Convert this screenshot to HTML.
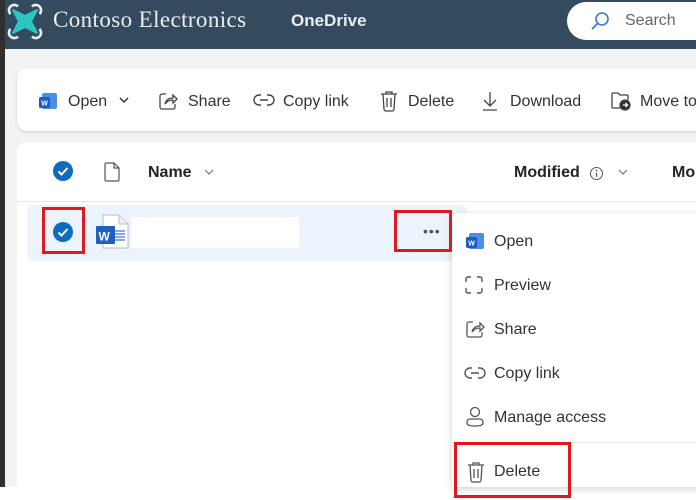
<!DOCTYPE html>
<html><head><style>
*{margin:0;padding:0;box-sizing:border-box}
body{width:696px;height:500px;overflow:hidden;background:#fff;position:relative;font-family:"Liberation Sans",sans-serif;color:#242424}
.a{position:absolute}
.t{position:absolute;font-size:16px;color:#333;line-height:20px;white-space:nowrap}
svg{position:absolute}
</style></head><body>
<div class="a" style="left:0;top:0;width:696px;height:487px;background:#f3f3f3"></div>
<div class="a" style="left:0;top:0;width:696px;height:49px;background:#344a5e"></div>
<div class="a" style="left:0;top:0;width:5px;height:487px;background:#2f2f2f"></div>
<!-- logo -->
<svg style="left:7px;top:3px" width="36" height="37" viewBox="0 0 36 37">
<g fill="none" stroke="#e8eef2" stroke-width="2.6"><path d="M3.5 11 A5 5 0 1 1 11 3.5"/><path d="M25 3.5 A5 5 0 1 1 32.5 11"/><path d="M3.5 26 A5 5 0 1 0 11 33.5"/><path d="M32.5 26 A5 5 0 1 1 25 33.5"/></g>
<path d="M6 7 L18 13 L30 7 L24 18.5 L30 30 L18 24 L6 30 L12 18.5Z" fill="#2ec4c4" stroke="#2ec4c4" stroke-width="2" stroke-linejoin="round"/>
</svg>
<div class="a" style="left:53px;top:7px;font-family:'Liberation Serif',serif;font-size:23px;letter-spacing:0.4px;color:#e8eef2;white-space:nowrap">Contoso Electronics</div>
<div class="a" style="left:291px;top:11px;font-size:17px;font-weight:bold;color:#e8eef2">OneDrive</div>
<div class="a" style="left:567px;top:2px;width:150px;height:38px;border-radius:19px;background:#fff"></div>
<svg style="left:589px;top:10px" width="22" height="22" viewBox="0 0 22 22"><circle cx="13" cy="9" r="6" fill="none" stroke="#3b7ad0" stroke-width="1.6"/><path d="M9 13 L3 19" stroke="#3b7ad0" stroke-width="1.8"/></svg>
<div class="t" style="left:625px;top:11px;color:#666">Search</div>
<!-- toolbar -->
<div class="a" style="left:17px;top:68px;width:700px;height:63px;background:#fff;border-radius:10px;box-shadow:0 1px 3px rgba(0,0,0,.15)"></div>
<svg style="left:38px;top:91px" width="20" height="20" viewBox="0 0 20 20"><rect x="4" y="2" width="15" height="16" rx="2" fill="#4a8ee8"/><rect x="1" y="6" width="11" height="11" rx="1.5" fill="#1b5bc2"/><text x="3.2" y="14.5" font-size="7" fill="#fff" font-weight="bold" font-family="Liberation Sans">W</text></svg>
<div class="t" style="left:68px;top:92px">Open</div>
<svg style="left:118px;top:96px" width="12" height="8"><path d="M2 2 L6 6 L10 2" stroke="#333" stroke-width="1.5" fill="none"/></svg>
<svg style="left:158px;top:91px" width="20" height="20" viewBox="0 0 20 20" fill="none" stroke="#444" stroke-width="1.3"><path d="M8 3H4a2 2 0 0 0-2 2v11a2 2 0 0 0 2 2h11a2 2 0 0 0 2-2v-3"/><path d="M7 13c1-4 4-6 8-6V4l4 4-4 4V9c-3 0-6 1-8 4z"/></svg>
<div class="t" style="left:188px;top:92px">Share</div>
<svg style="left:253px;top:93px" width="22" height="14" viewBox="0 0 22 14" fill="none" stroke="#444" stroke-width="1.4"><path d="M8 2H6a5 5 0 0 0 0 10h2M14 2h2a5 5 0 0 1 0 10h-2M7 7h8"/></svg>
<div class="t" style="left:283px;top:92px">Copy link</div>
<svg style="left:379px;top:90px" width="20" height="22" viewBox="0 0 20 22" fill="none" stroke="#444" stroke-width="1.3"><path d="M2 4h16M7 4V2h6v2M4 4l1 15a2 2 0 0 0 2 2h6a2 2 0 0 0 2-2l1-15M8 8v9M12 8v9"/></svg>
<div class="t" style="left:408px;top:92px">Delete</div>
<svg style="left:481px;top:90px" width="18" height="22" viewBox="0 0 18 22" fill="none" stroke="#444" stroke-width="1.3"><path d="M9 2v14M3 10l6 6 6-6M2 20h14"/></svg>
<div class="t" style="left:510px;top:92px">Download</div>
<svg style="left:610px;top:90px" width="22" height="22" viewBox="0 0 22 22" fill="none" stroke="#444" stroke-width="1.3"><path d="M11 18H3a1 1 0 0 1-1-1V4a1 1 0 0 1 1-1h5l2 2h7a1 1 0 0 1 1 1v4"/><circle cx="15" cy="15" r="5" fill="#333"/><path d="M13 15h4M15.5 13l2 2-2 2" stroke="#fff"/></svg>
<div class="t" style="left:640px;top:92px">Move to</div>
<!-- list card -->
<div class="a" style="left:17px;top:143px;width:700px;height:344px;background:#fff;border-radius:8px 0 0 0"></div>
<div class="a" style="left:17px;top:201px;width:700px;height:1px;background:#e8e8e8"></div>
<svg style="left:52px;top:160px" width="22" height="22" viewBox="0 0 22 22"><circle cx="11" cy="11" r="10" fill="#0f6cbd"/><path d="M6.5 11.5 L9.5 14.5 L15.5 8" stroke="#fff" stroke-width="2" fill="none"/></svg>
<svg style="left:104px;top:162px" width="16" height="20" viewBox="0 0 16 20" fill="none" stroke="#555" stroke-width="1.2"><path d="M2 1h8l5 5v12a1 1 0 0 1-1 1H2a1 1 0 0 1-1-1V2a1 1 0 0 1 1-1zM10 1v5h5"/></svg>
<div class="t" style="left:148px;top:163px;font-weight:bold;color:#242424">Name</div>
<svg style="left:204px;top:169px" width="10" height="7"><path d="M1 1 L5 5 L9 1" stroke="#777" stroke-width="1.2" fill="none"/></svg>
<div class="t" style="left:514px;top:163px;font-weight:bold;color:#242424">Modified</div>
<svg style="left:589px;top:166px" width="15" height="15"><circle cx="7.5" cy="7.5" r="6" fill="none" stroke="#555" stroke-width="1"/><path d="M7.5 6.5v4.5" stroke="#555" stroke-width="1.2"/><circle cx="7.5" cy="4.5" r=".9" fill="#555"/></svg>
<svg style="left:618px;top:169px" width="10" height="7"><path d="M1 1 L5 5 L9 1" stroke="#777" stroke-width="1.2" fill="none"/></svg>
<div class="t" style="left:672px;top:163px;font-weight:bold;color:#242424">Mo</div>
<!-- selected row -->
<div class="a" style="left:27px;top:205px;width:440px;height:56px;background:#ebf3fc;border-radius:6px"></div>
<svg style="left:52px;top:221px" width="22" height="22" viewBox="0 0 22 22"><circle cx="11" cy="11" r="10" fill="#0f6cbd"/><path d="M6.5 11.5 L9.5 14.5 L15.5 8" stroke="#fff" stroke-width="2" fill="none"/></svg>
<svg style="left:95px;top:214px" width="36" height="36" viewBox="0 0 36 36"><path d="M8 1h16l9 9v24H8z" fill="#fff" stroke="#bbb"/><path d="M24 1v9h9" fill="#eee" stroke="#bbb"/><path d="M20 17h10M20 20h10M20 23h10M20 26h10" stroke="#5a8fd8" stroke-width="1.4"/><rect x="1" y="12" width="19" height="18" rx="1" fill="#1f5fbf"/><text x="3.5" y="26.5" font-size="12" fill="#fff" font-weight="bold" font-family="Liberation Sans">W</text></svg>
<div class="a" style="left:131px;top:217px;width:168px;height:31px;background:#fff"></div>
<div class="a" style="left:423px;top:223px;font-size:14px;color:#555;letter-spacing:1px">•••</div>
<!-- menu -->
<div class="a" style="left:452px;top:213px;width:260px;height:274px;background:#fff;border-radius:6px 0 0 0;box-shadow:0 2px 8px rgba(0,0,0,.18)"></div>
<div class="a" style="left:452px;top:442px;width:260px;height:1px;background:#e6e6e6"></div>
<svg style="left:465px;top:231px" width="20" height="20" viewBox="0 0 20 20"><rect x="4" y="2" width="15" height="16" rx="2" fill="#4a8ee8"/><rect x="1" y="6" width="11" height="11" rx="1.5" fill="#1b5bc2"/><text x="3.2" y="14.5" font-size="7" fill="#fff" font-weight="bold" font-family="Liberation Sans">W</text></svg>
<div class="t" style="left:494px;top:232px">Open</div>
<svg style="left:465px;top:276px" width="18" height="18" viewBox="0 0 18 18" fill="none" stroke="#555" stroke-width="1.4"><path d="M1 6V3a2 2 0 0 1 2-2h3M12 1h3a2 2 0 0 1 2 2v3M17 12v3a2 2 0 0 1-2 2h-3M6 17H3a2 2 0 0 1-2-2v-3"/></svg>
<div class="t" style="left:494px;top:276px">Preview</div>
<svg style="left:465px;top:319px" width="20" height="20" viewBox="0 0 20 20" fill="none" stroke="#555" stroke-width="1.3"><path d="M8 3H4a2 2 0 0 0-2 2v11a2 2 0 0 0 2 2h11a2 2 0 0 0 2-2v-3"/><path d="M7 13c1-4 4-6 8-6V4l4 4-4 4V9c-3 0-6 1-8 4z"/></svg>
<div class="t" style="left:494px;top:320px">Share</div>
<svg style="left:464px;top:366px" width="22" height="14" viewBox="0 0 22 14" fill="none" stroke="#555" stroke-width="1.4"><path d="M8 2H6a5 5 0 0 0 0 10h2M14 2h2a5 5 0 0 1 0 10h-2M7 7h8"/></svg>
<div class="t" style="left:494px;top:364px">Copy link</div>
<svg style="left:465px;top:406px" width="20" height="22" viewBox="0 0 20 22" fill="none" stroke="#555" stroke-width="1.3"><circle cx="10" cy="6" r="4.5"/><path d="M2 16a3 3 0 0 1 3-3h10a3 3 0 0 1 3 3v1c0 2-3 3-8 3s-8-1-8-3z"/></svg>
<div class="t" style="left:494px;top:408px">Manage access</div>
<svg style="left:466px;top:461px" width="20" height="22" viewBox="0 0 20 22" fill="none" stroke="#555" stroke-width="1.3"><path d="M2 4h16M7 4V2h6v2M4 4l1 15a2 2 0 0 0 2 2h6a2 2 0 0 0 2-2l1-15M8 8v9M12 8v9"/></svg>
<div class="t" style="left:494px;top:462px">Delete</div>
<!-- red boxes -->
<div class="a" style="left:42px;top:207px;width:43px;height:47px;border:3px solid #e0191e"></div>
<div class="a" style="left:394px;top:210px;width:58px;height:42px;border:3px solid #e0191e"></div>
<div class="a" style="left:454px;top:442px;width:117px;height:56px;border:3px solid #e0191e"></div>
</body></html>
